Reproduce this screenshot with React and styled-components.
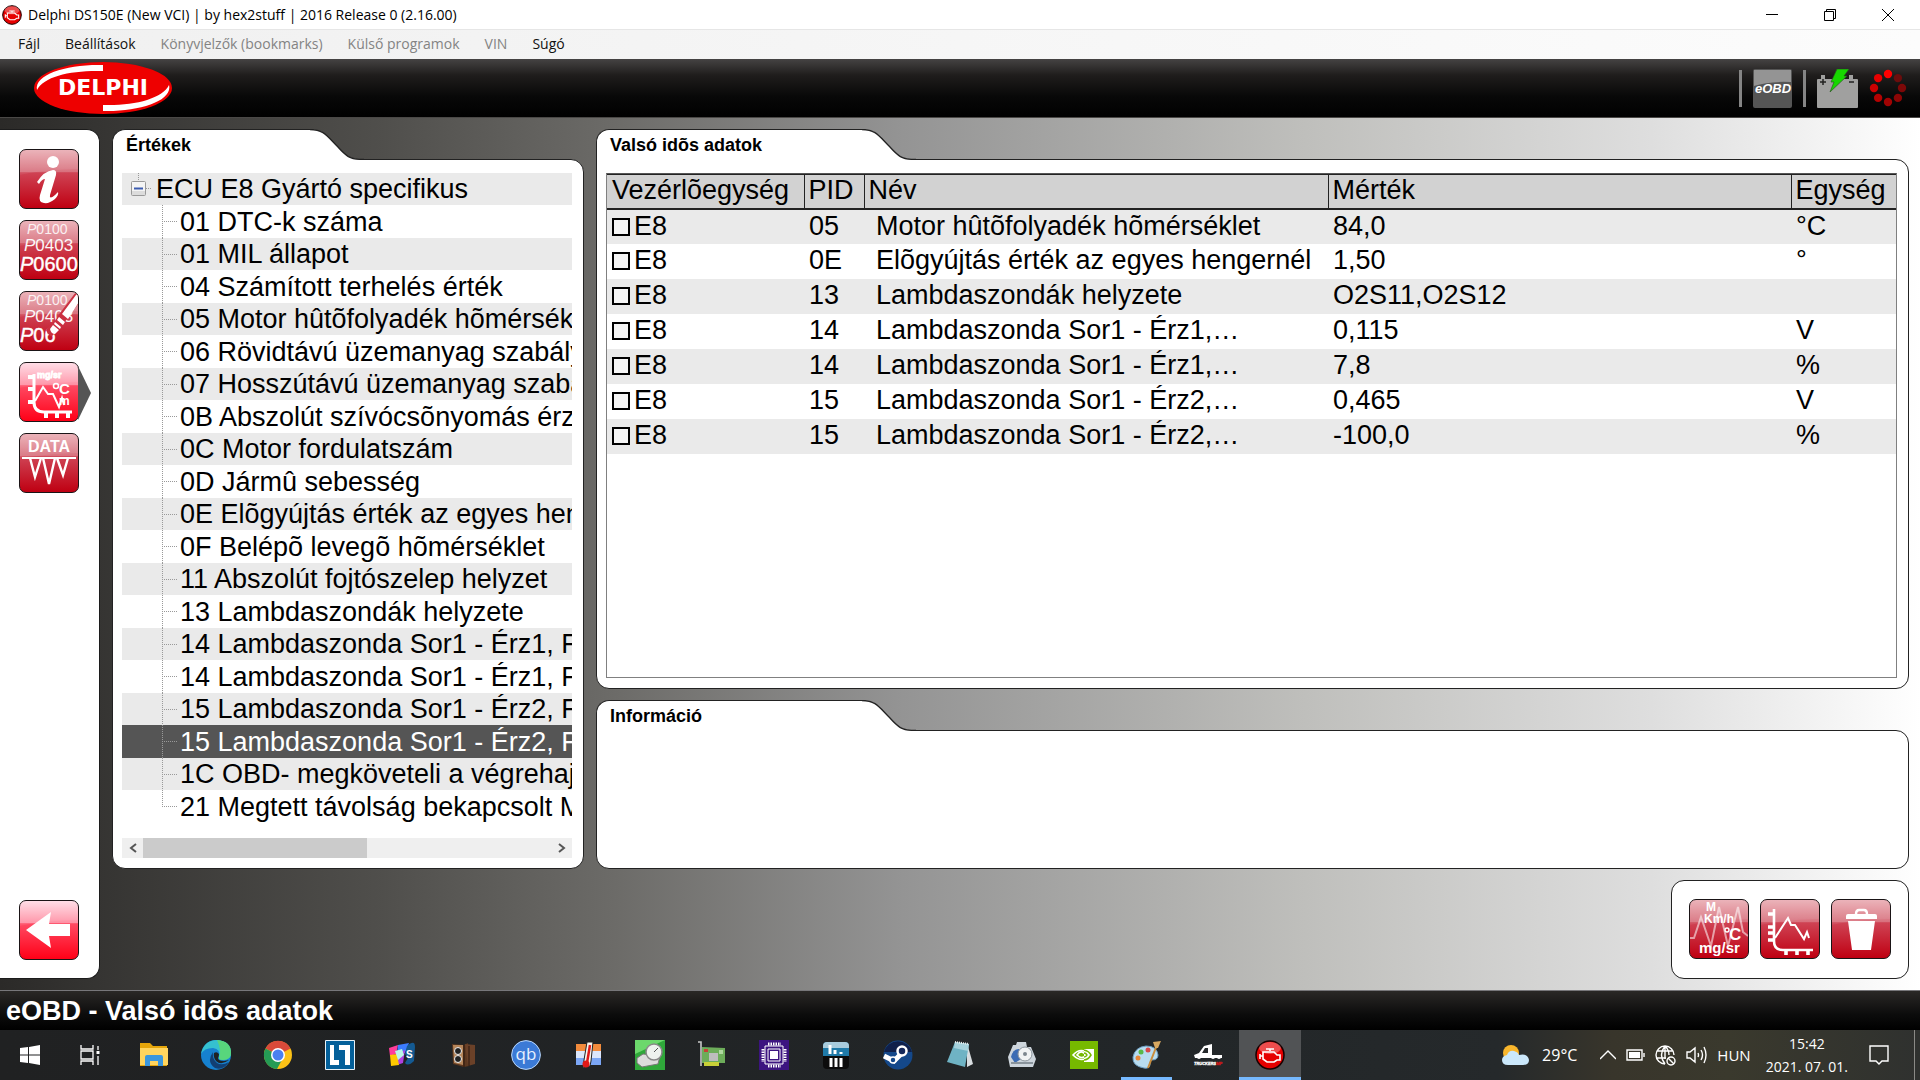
// App.jsx

import React, { useState } from 'react';
import styled, { createGlobalStyle } from 'styled-components';

const GlobalStyle = createGlobalStyle`
    * {
        box-sizing: border-box;
    }

    body {
        margin: 0;
        font-family: "Liberation Sans", Arial, sans-serif;
        color: #000;
    }

    button {
        padding: 0;
        border: 0;
        background: none;
        font: inherit;
        color: inherit;
    }

    ul {
        margin: 0;
        padding: 0;
        list-style: none;
    }

    svg {
        display: block;
        flex: none;
    }
`;

const Screen = styled.div`
    min-height: 100vh;
    display: flex;
    flex-direction: column;
`;

/* ---- window title and menu ---- */

const TitleBar = styled.header`
    height: 29px;
    display: flex;
    align-items: center;
    gap: 6px;
    padding: 0 3px 0 2px;
    background: #fff;
    font-family: "Open Sans", sans-serif;
    font-size: 14px;

    h1 {
        flex: 1;
        margin: 0;
        font-size: inherit;
        font-weight: 400;
    }
`;

const WindowButtons = styled.div`
    display: flex;
`;

const WindowButton = styled.button`
    width: 58px;
    height: 28px;
    display: flex;
    align-items: center;
    justify-content: center;
`;

const MenuBar = styled.nav`
    height: 30px;
    display: flex;
    align-items: center;
    gap: 25px;
    padding: 0 0 2px 18px;
    border-top: 1px solid #e6e6e6;
    background: linear-gradient(90deg, #f0f0f0, #fcfcfc);
    font-family: "Open Sans", sans-serif;
    font-size: 14px;
`;

const MenuItem = styled.button`
    color: #111;

    &:disabled {
        color: #838383;
    }
`;

/* ---- black brand bar ---- */

const BrandBar = styled.div`
    height: 59px;
    display: flex;
    align-items: center;
    justify-content: space-between;
    padding: 0 13px 0 34px;
    border-bottom: 1px solid #4a4846;
    background: linear-gradient(#454343, #1f1d1c 28%, #080808 65%, #000);
`;

const StatusIcons = styled.div`
    display: flex;
    align-items: center;
    gap: 11px;
`;

const Divider = styled.span`
    width: 3px;
    height: 37px;
    background: #858585;
`;

/* ---- workspace ---- */

const Workspace = styled.main`
    flex: 1;
    display: flex;
    padding: 11px 11px 11px 0;
    gap: 12px;
    background: linear-gradient(90deg, #2b2a28, #353432 5%, #504f4c 20%, #6c6b68 32%, #949494 47%, #bfbfbc 68%, #dedede 86%, #fff);
`;

const Sidebar = styled.nav`
    width: 100px;
    display: flex;
    flex-direction: column;
    align-items: flex-start;
    gap: 11px;
    padding: 19px 0 18px 19px;
    border: 1px solid #1c1c1c;
    border-left: 0;
    border-radius: 0 13px 13px 0;
    background: #fff;
`;

const ToolButton = styled.button`
    position: relative;
    width: 60px;
    height: 60px;
    border: 1px solid #1a1416;
    border-radius: 7px;
    overflow: ${(p) => (p.$active ? 'visible' : 'hidden')};
    margin-top: ${(p) => (p.$last ? 'auto' : '0')};
    background: ${(p) =>
        p.$bright
            ? 'linear-gradient(#ffdbe5, #ff8fa3 38%, #ff4a63 39%, #ff0017)'
            : 'linear-gradient(#eaadb4, #d8707d 38%, #cf4354 39%, #bf0012)'};

    &::after {
        content: "";
        display: ${(p) => (p.$active ? 'block' : 'none')};
        position: absolute;
        left: 100%;
        top: 3px;
        width: 13px;
        height: 54px;
        background: #555;
        clip-path: polygon(0 0, 100% 50%, 0 100%);
    }
`;

const Content = styled.div`
    flex: 1;
    min-width: 0;
    display: flex;
    flex-direction: column;
    gap: 11px;
`;

const Panels = styled.div`
    flex: 1;
    display: grid;
    grid-template-columns: 472px minmax(0, 1fr);
    gap: 12px;
`;

const RightColumn = styled.div`
    display: flex;
    flex-direction: column;
    gap: 11px;
`;

const PanelFrame = styled.section`
    flex: ${(p) => (p.$grow ? 1 : 'none')};
    min-width: 0;
    display: flex;
    flex-direction: column;
`;

const TabHead = styled.div`
    position: relative;
    display: flex;
    height: 31px;
    margin-bottom: -1px;

    h2 {
        width: ${(p) => (p.$wide ? '266px' : '198px')};
        margin: 0;
        padding-left: 13px;
        border: 1px solid #222;
        border-width: 1px 0 0 1px;
        border-radius: 13px 0 0 0;
        background: #fff;
        font-size: 18px;
        line-height: 30px;
    }
`;

const PanelBody = styled.div`
    flex: 1;
    min-height: 139px;
    display: flex;
    flex-direction: column;
    gap: 15px;
    padding: 13px 11px 10px 9px;
    border: 1px solid #222;
    border-radius: 0 13px 13px 13px;
    background: #fff;
`;

const Tree = styled.ul`
    flex: 1;
    overflow: hidden;
    font-size: 27px;
`;

const TreeRow = styled.li`
    display: flex;
    align-items: center;
    height: 32px;
    padding-left: ${(p) => (p.$root ? '9px' : '40px')};
    gap: ${(p) => (p.$root ? '5px' : '3px')};
    line-height: 32px;
    white-space: nowrap;
    background: ${(p) => (p.$selected ? '#555' : '#fff')};
    color: ${(p) => (p.$selected ? '#fff' : '#000')};

    &:nth-child(odd) {
        background: ${(p) => (p.$selected ? '#555' : '#eaeaea')};
    }

    &:nth-child(even) {
        height: 33px;
    }
`;

const Branch = styled.span`
    flex: none;
    align-self: stretch;
    width: 15px;
    background:
        repeating-linear-gradient(90deg, #999 0 1px, transparent 1px 2px) 0 50% / 100% 1px no-repeat,
        repeating-linear-gradient(#999 0 1px, transparent 1px 2px) 0 0 / 1px ${(p) => (p.$end ? '50%' : '100%')} no-repeat;
`;

const ScrollBar = styled.div`
    height: 20px;
    display: flex;
    background: #efefef;
`;

const ScrollArrow = styled.button`
    width: 21px;
    display: flex;
    align-items: center;
    justify-content: center;
`;

const ScrollTrack = styled.div`
    flex: 1;

    div {
        width: 55%;
        height: 100%;
        background: #cbcbcb;
    }
`;

const TableBox = styled.div`
    flex: 1;
    border: 1px solid #808080;
    border-top-color: #555;
`;

const ValueTable = styled.table`
    width: 100%;
    table-layout: fixed;
    border-collapse: collapse;
    font-size: 27px;
    line-height: 32px;

    th {
        height: 34px;
        padding: 0 0 0 4px;
        border: 1px solid #222;
        border-width: 1px 0 2px 1px;
        background: #d2d2d2;
        font-weight: 400;
        line-height: 30px;
        text-align: left;
        vertical-align: top;
        white-space: nowrap;
    }

    th:first-child {
        padding-left: 5px;
        border-left: 0;
    }

    td {
        height: 35px;
        padding: 0 0 0 5px;
        vertical-align: top;
        white-space: nowrap;
    }

    td:nth-child(3) {
        padding-left: 12px;
    }

    tbody tr:nth-child(odd) {
        background: #eaeaea;
    }
`;

const CheckLabel = styled.label`
    display: flex;
    align-items: center;
    gap: 4px;

    input {
        appearance: none;
        width: 18px;
        height: 18px;
        margin: 2px 0 0;
        border: 2px solid #000;
        background: #f6f6f6;
    }

    input:checked {
        background: #555;
    }
`;

const ActionBox = styled.div`
    align-self: flex-end;
    display: flex;
    gap: 11px;
    padding: 18px 17px 19px;
    border: 1px solid #222;
    border-radius: 13px;
    background: #fff;
`;

const StatusLine = styled.footer`
    height: 40px;
    padding-left: 6px;
    border-top: 1px solid #77777a;
    background: linear-gradient(#2a2826, #0c0c0c 60%, #000);
    color: #fff;
    font-size: 27px;
    font-weight: 700;
    line-height: 40px;
`;

/* ---- taskbar ---- */

const Taskbar = styled.div`
    height: 50px;
    display: flex;
    background: linear-gradient(90deg, #202122, #222628 60%, #25292b 78%, #38352b 84%, #3a392d 90%, #2f312f);
    color: #fff;
    font-family: "Open Sans", sans-serif;
    font-size: 15px;
`;

const TaskButton = styled.button`
    width: ${(p) => (p.$system ? '60px' : '62px')};
    display: flex;
    align-items: center;
    justify-content: center;
    background: ${(p) => (p.$active ? '#515355' : 'transparent')};
    border: 0 solid #76b9ff;
    border-width: ${(p) => (p.$active ? '3px 0' : '0')};
    border-top-color: transparent;
    background-clip: border-box;
`;

const TaskGroup = styled.div`
    display: flex;
    margin-left: 3px;
`;

const RunningMark = styled.span`
    display: flex;
    align-items: center;
    justify-content: center;
    width: 51px;
    height: 100%;
    border-top: 3px solid transparent;
    border-bottom: 3px solid #76b9ff;
`;

const Tray = styled.div`
    margin: 0 5px 0 auto;
    padding-right: 25px;
    display: flex;
    align-items: center;
    gap: 15px;
    border-right: 1px solid #8a8a86;
`;

const TrayGroup = styled.div`
    display: flex;
    align-items: center;
    gap: 10px;
`;

const Weather = styled.div`
    display: flex;
    align-items: center;
    gap: 13px;
    margin-right: 8px;
    font-size: 16px;
`;

const Clock = styled.time`
    margin-right: 6px;
    font-size: 14px;
    line-height: 23px;
    text-align: center;
`;

/* ---- icons ---- */

const EngineIcon = ({ size }) => (
    <svg width={size} height={size} viewBox="0 0 30 30">
        <circle cx="15" cy="15" r="14" fill="#e60000" stroke="#1a0000" strokeWidth="1.5" />
        <ellipse cx="15" cy="8" rx="11" ry="6" fill="#fff" opacity=".3" />
        <path d="M11 9h8M15 9v2M8 12h11l3 3h3v5h-3l-3 2h-7l-4-3zM5 14v5M5 16h3" fill="none" stroke="#fff" strokeWidth="1.6" />
    </svg>
);

const DelphiLogo = () => (
    <svg width="138" height="52" viewBox="0 0 138 52" role="img" aria-label="Delphi">
        <ellipse cx="69" cy="26" rx="69" ry="26" fill="#ee0000" />
        <path d="M69 3v6C38 8 10 14 3 28 0 12 34 2 69 3z" fill="#fff" />
        <path d="M69 49v-6c31 1 59-6 66-20 4 16-30 27-66 26z" fill="#fff" />
        <text x="69" y="33" textAnchor="middle" fill="#fff" fontFamily="DejaVu Sans" fontWeight="700" fontSize="22">DELPHI</text>
    </svg>
);

const EobdBadge = () => (
    <svg width="39" height="39" viewBox="0 0 39 39">
        <rect width="39" height="39" rx="2" fill="#555" />
        <path d="M1 1h37v12Q16 12 1 17z" fill="#949494" />
        <text x="20" y="24" textAnchor="middle" fill="#fff" fontFamily="Liberation Sans" fontWeight="700" fontStyle="italic" fontSize="13">eOBD</text>
    </svg>
);

const BatteryBadge = () => (
    <svg width="41" height="39" viewBox="0 0 41 39">
        <path d="M0 11q0-1 1-1h3V6h4v4h24V6h4v4h4q1 0 1 1v27q0 1-1 1H1q-1 0-1-1z" fill="#a0a09f" />
        <path d="M3 13h6M6 10v6M32 13h5" stroke="#222" strokeWidth="1.5" />
        <path d="M20 0h12l-5 7h3L13 23l4-10h-3z" fill="#17d800" stroke="#2a5a20" strokeWidth=".7" />
    </svg>
);

const spinnerDots = ['#ff0000', '#6b0d0d', '#7d0808', '#8c0505', '#a00303', '#b40202', '#cc0101', '#e80000'];

const Spinner = () => (
    <svg width="38" height="38" viewBox="0 0 38 38">
        {spinnerDots.map((color, i) => {
            const a = (i * Math.PI) / 4;
            return <circle key={color} cx={19 + 14 * Math.sin(a)} cy={19 - 14 * Math.cos(a)} r="4.2" fill={color} />;
        })}
    </svg>
);

const Glyph = ({ children }) => (
    <svg width="58" height="58" viewBox="1 1 58 58" fill="#fff" fontFamily="Liberation Sans">
        <path d="M0 0h60v20q-30 0-60 6z" fill="#fff" opacity=".08" />
        {children}
    </svg>
);

const InfoGlyph = () => (
    <Glyph>
        <ellipse cx="34" cy="13" rx="6" ry="6" />
        <path d="M18 33q7-11 16-12 4 0 3 5l-6 20q-1 5 5 0l3-3q1 3-3 7-6 5-11 4-6-1-4-8l5-16q-3 0-6 5z" />
    </Glyph>
);

const CodesGlyph = () => (
    <Glyph>
        <text x="8" y="14" fontSize="14" opacity=".85"><tspan fontStyle="italic">P</tspan>0100</text>
        <text x="5" y="31" fontSize="17" opacity=".95"><tspan fontStyle="italic">P</tspan>0403</text>
        <text x="1" y="51" fontSize="20" stroke="#fff" strokeWidth=".4"><tspan fontStyle="italic">P</tspan>0600</text>
    </Glyph>
);

const EraseGlyph = () => (
    <Glyph>
        <text x="8" y="14" fontSize="14" opacity=".85"><tspan fontStyle="italic">P</tspan>0100</text>
        <text x="5" y="31" fontSize="17" opacity=".95"><tspan fontStyle="italic">P</tspan>0403</text>
        <text x="1" y="51" fontSize="20" stroke="#fff" strokeWidth=".4"><tspan fontStyle="italic">P</tspan>06</text>
        <path d="M29 36l7-6 5-8L57 1h3v11L42 36l-9 9q-3 1-6-6z" fill="#cb3041" />
        <path d="M43 23L57 4l3-2v9L49 28zM40 26l6 5-2 3-6-5zM36 31l6 5-1 2-6-5zM34 34l6 5-4 4q-4 0-5-5z" />
    </Glyph>
);

const LiveGlyph = () => (
    <Glyph>
        <path d="M15 12v28q0 10 10 10h28" fill="none" stroke="#fff" strokeWidth="3" />
        <path d="M9 15h6M9 27h6M9 40h6M27 50v6M38 50v6M49 50v6" stroke="#fff" strokeWidth="4" />
        <path d="M16 39l8-14 5 7h5l6 13 3-9 2 7" fill="none" stroke="#fff" strokeWidth="2" />
        <text x="18" y="16" fontSize="9" fontWeight="700" stroke="#fff" strokeWidth=".8">mg/sr</text>
        <circle cx="37" cy="24" r="2.5" fill="none" stroke="#fff" strokeWidth="1.6" />
        <text x="40" y="32" fontSize="15" fontWeight="700">C</text>
        <text x="40" y="43" fontSize="12" fontWeight="700">m</text>
    </Glyph>
);

const DataGlyph = () => (
    <Glyph>
        <text x="30" y="19" textAnchor="middle" fontSize="16" fontWeight="700">DATA</text>
        <path d="M3 25h54" stroke="#fff" strokeWidth="2" />
        <path d="M11 25l5 19 6-19M24 25l6 26 6-26M38 25l6 17 5-17" fill="none" stroke="#fff" strokeWidth="2.4" />
    </Glyph>
);

const BackGlyph = () => (
    <Glyph>
        <path d="M7 30l25-18-2 12h21v12H30l2 12z" />
    </Glyph>
);

const UnitsGlyph = () => (
    <Glyph>
        <path d="M1 39h4l7-21 10 29 8-39 9 39 10-39 5 25 5 4" fill="none" stroke="#fff" strokeWidth="2" opacity=".55" />
        <g fontWeight="700" fontSize="12">
            <text x="17" y="12">M</text>
            <text x="15" y="24">Km/h</text>
            <text x="40" y="41" fontSize="17">C</text>
            <text x="10" y="54" fontSize="15">mg/sr</text>
        </g>
        <circle cx="38" cy="31" r="2" fill="none" stroke="#fff" strokeWidth="1.4" />
    </Glyph>
);

const ChartGlyph = () => (
    <Glyph>
        <path d="M14 10v32q0 9 9 9h30" fill="none" stroke="#fff" strokeWidth="2.6" />
        <path d="M8 15h6M8 28h6M8 34h6M8 41h6M26 51v5M37 51v5M48 51v5" stroke="#fff" strokeWidth="3.6" />
        <path d="M15 39l13-20 3 7h4l9 14 3-7 2 6" fill="none" stroke="#fff" strokeWidth="2" />
    </Glyph>
);

const TrashGlyph = () => (
    <Glyph>
        <path d="M25 15q0-4 3-4h5q3 0 3 4" fill="none" stroke="#fff" strokeWidth="2.4" />
        <path d="M15 17q0-2 2-2h27q2 0 2 2v3H15zM17 22h27l-4 29H21z" />
    </Glyph>
);

const TaskSvg = ({ children }) => (
    <svg width="30" height="30" viewBox="0 0 30 30">{children}</svg>
);

const WindowsIcon = () => (
    <svg width="20" height="20" viewBox="0 0 20 20" fill="#fff">
        <path d="M0 3l8-1v7.500H0zM9 2l11-2v9.500H9zM0 10.500h8V18l-8-1zM9 10.500h11V20L9 18z" />
    </svg>
);

const TaskViewIcon = () => (
    <svg width="20" height="20" viewBox="0 0 20 20" fill="none" stroke="#fff" strokeWidth="1.3">
        <path d="M1 0v4h12V0M1 20v-4h12v4M1 6h12v8H1zM18 1v4M18 11v9" />
        <path d="M18 6v3" strokeWidth="3" />
    </svg>
);

const ExplorerIcon = () => (
    <TaskSvg>
        <path d="M1 3h10l3 3h14v20H1z" fill="#e5a50a" />
        <path d="M1 8h28v17H1z" fill="#ffd45e" />
        <path d="M6 26V17q0-2 2-2h14q2 0 2 2v9h-5v-5h-8v5z" fill="#3a96dd" />
    </TaskSvg>
);

const EdgeIcon = () => (
    <TaskSvg>
        <circle cx="15" cy="15" r="15" fill="#1681cf" />
        <path d="M0 14Q3 0 16 0q14 1 14 13 0 7-8 7-5 0-4-3 2-8-6-9-9 0-12 6z" fill="#35c1d0" />
        <path d="M16 0q14 1 14 13 0 7-8 7-5 0-4-3 3-6-2-17z" fill="#58d67c" />
        <path d="M12 12q-7 10 2 16 8 3 14-6-7 4-12 1-5-4-4-11z" fill="#123f73" />
        <path d="M13 13q3-2 5 1 0 2-1 4 0 3 6 3l5-1q-8 6-13 1-3-4-2-8z" fill="#202224" />
    </TaskSvg>
);

const ChromeIcon = () => (
    <TaskSvg>
        <circle cx="15" cy="15" r="14" fill="#fbc116" />
        <path d="M15 15L2.500 8.500A14 14 0 0 1 27.500 8.500z" fill="#d94a3a" />
        <path d="M15 15L2.500 8.500A14 14 0 0 0 14 29l6-11z" fill="#259b55" />
        <circle cx="15" cy="15" r="7" fill="#fff" />
        <circle cx="15" cy="15" r="5.500" fill="#4a80f0" />
    </TaskSvg>
);

const BlocksIcon = () => (
    <TaskSvg>
        <path d="M.5.5h29v29H.5z" fill="#04609a" stroke="#e8f2f8" />
        <path d="M5 5h4v15h5v5H5zM14 5h11v20h-5V10h-6z" fill="#fff" />
    </TaskSvg>
);

const PaletteBoxIcon = () => (
    <TaskSvg>
        <path d="M2 8l9-3-2 9-6 2z" fill="#ff3c9a" />
        <path d="M11 5l11-2-4 10-8 1z" fill="#3c7cff" />
        <path d="M18 10l-2 13-6 2-1-11z" fill="#b040e0" />
        <path d="M3 15l7-1 2 11-8 1z" fill="#ffc800" />
        <path d="M8 11l7-2 2 6-6 5z" fill="#b8f6e8" />
        <path d="M20 6q8-7 8 1l-1 14q-6 6-9 2l3-5-3-4z" fill="#145a92" />
        <text x="19" y="18" fontFamily="Liberation Sans" fontWeight="700" fontSize="10" fill="#fff">S</text>
    </TaskSvg>
);

const SpeakerBoxIcon = () => (
    <TaskSvg>
        <path d="M3 4l12 1v22l-11-3zM15 5l4-2 1 23-5 1z" fill="#5b371f" />
        <path d="M4 5h10v20l-9-2z" fill="#b6865a" />
        <path d="M16 4l10 1v19l-7 2z" fill="#6b4128" />
        <path d="M15 5v22M20 6v20" stroke="#2a170c" />
        <circle cx="9" cy="11" r="3.500" fill="#222" stroke="#eee" />
        <circle cx="9" cy="19" r="3.500" fill="#222" stroke="#eee" />
    </TaskSvg>
);

const QbIcon = () => (
    <TaskSvg>
        <circle cx="15" cy="15" r="14.400" fill="#3b7ad6" stroke="#b9d6fa" />
        <text x="15" y="20" textAnchor="middle" fontFamily="Open Sans" fontSize="17" fill="#e8f1ff">qb</text>
    </TaskSvg>
);

const ThermoIcon = () => (
    <TaskSvg>
        <path d="M3 4h25v21H3z" fill="#f28b3c" />
        <path d="M3 11h25v14H3z" fill="#dbe6fb" />
        <path d="M3 18h25v7H3z" fill="#7ba6f5" />
        <path d="M14 2h6l-2 19-1 5-7 2 1-8z" fill="#f5f5ee" stroke="#222" />
        <path d="M17 5l-3 18" stroke="#e01818" strokeWidth="2.500" />
        <circle cx="13" cy="24" r="3.500" fill="#e01818" />
    </TaskSvg>
);

const DiskIcon = () => (
    <TaskSvg>
        <path d="M0 0h30v30H0z" fill="#2fa83a" />
        <path d="M0 0h30L0 14z" fill="#6cd86c" />
        <path d="M2 18l6-4 17 2-2 8-16 3-5-4z" fill="#dcdcdc" stroke="#777" />
        <circle cx="19" cy="12" r="8" fill="#eef2ee" stroke="#888" strokeWidth="1.500" />
        <path d="M19 12l4-4" stroke="#555" />
    </TaskSvg>
);

const CardIcon = () => (
    <TaskSvg>
        <path d="M1 2h3v24" fill="none" stroke="#c8c8c8" strokeWidth="1.600" />
        <path d="M5 7l23 1v15H5z" fill="#6dad5a" />
        <path d="M7 22h15v4H7z" fill="#c8d038" />
        <path d="M12 13h9v8h-9z" fill="#bdbdbd" />
        <path d="M7 9h4v3H7z" fill="#c84038" />
        <path d="M22 10h4v4h-4z" fill="#b0d8a0" />
    </TaskSvg>
);

const ChipIcon = () => (
    <TaskSvg>
        <path d="M0 0h30v30H0z" fill="#3c1480" />
        <path d="M6 6h18v18H6zM9 9h12v12H9z" fill="none" stroke="#fff" />
        <path d="M11 11h8v8h-8z" fill="#fff" />
        <path d="M9 4h13M9 26h13" stroke="#fff" strokeWidth="3" strokeDasharray="1.500 1" />
        <path d="M4 9v13M26 9v13" stroke="#fff" strokeWidth="3" strokeDasharray="1.500 1" />
    </TaskSvg>
);

const MonitorIcon = () => (
    <TaskSvg>
        <rect x="2" y="2" width="26" height="27" rx="4" fill="#0c0c0c" />
        <path d="M2 16V6q0-4 4-4h18q4 0 4 4v10z" fill="#1f7aa8" />
        <path d="M2 8V6q0-4 4-4h18q4 0 4 4v2z" fill="#a8cbdc" />
        <path d="M9 5v9M14 10v4M20 12v2M10 18v9M15 18v9M20 18v9" stroke="#fff" strokeWidth="3" />
    </TaskSvg>
);

const SteamIcon = () => (
    <TaskSvg>
        <circle cx="15" cy="15" r="14.500" fill="#14488a" />
        <path d="M1 12A14.500 14.500 0 0 1 29 12z" fill="#10204a" />
        <path d="M1 16l10 5 7-7" fill="none" stroke="#fff" strokeWidth="5" />
        <circle cx="19" cy="11" r="4.500" fill="#14285a" stroke="#fff" strokeWidth="2.500" />
        <circle cx="10" cy="20" r="3" fill="#14488a" stroke="#fff" strokeWidth="1.500" />
    </TaskSvg>
);

const NotepadIcon = () => (
    <TaskSvg>
        <path d="M22 3l6 21-6 3z" fill="#d8dde0" />
        <path d="M10 2l14 2-4 23L2 22z" fill="#6fb3c4" />
        <path d="M10 2l14 2-1 7-14-3z" fill="#a6d2dc" />
        <path d="M10 2l14 2" stroke="#eee" strokeWidth="2" strokeDasharray="1 1" />
    </TaskSvg>
);

const ToolboxIcon = () => (
    <TaskSvg>
        <path d="M10 2h9l1 5h4l5 12-3 8H3L1 17 6 5h3z" fill="#cdd5dc" />
        <path d="M4 17q2-8 8-8l2 10-6 4z" fill="#3c6cb4" />
        <circle cx="18" cy="14" r="7" fill="#f0f2f4" stroke="#8a949c" />
        <circle cx="18" cy="14" r="2" fill="#7c868e" />
        <path d="M4 23h22" stroke="#8a949c" strokeWidth="2" />
    </TaskSvg>
);

const NvidiaIcon = () => (
    <TaskSvg>
        <path d="M1 1h28v28H1z" fill="#76b900" />
        <path d="M15 9h10v13H15z" fill="#fff" />
        <path d="M4 15q8-9 17 0-8 9-17 0zM8 15q4-6 9 0-4 5-9 0z" fill="none" stroke="#fff" strokeWidth="1.600" />
        <path d="M15 10q5 1 7 5-3 5-7 5M15 13q2 0 3 2-1 2-3 2" fill="none" stroke="#76b900" strokeWidth="1.600" />
    </TaskSvg>
);

const PaintIcon = () => (
    <TaskSvg>
        <path d="M15 6q11 0 12 9 0 5-6 5-3 1-2 5-1 4-6 3Q1 26 2 17 4 7 15 6z" fill="#b8dcf0" stroke="#6a9cc0" />
        <circle cx="7" cy="18" r="2.500" fill="#e8883a" />
        <circle cx="10" cy="12" r="2.500" fill="#58b848" />
        <circle cx="17" cy="10" r="2.500" fill="#d84848" />
        <path d="M26 5L17 28" stroke="#c88c3c" strokeWidth="2" />
        <path d="M22 2l8-1-3 7h-3z" fill="#d8a860" />
    </TaskSvg>
);

const TruckIcon = () => (
    <TaskSvg>
        <path d="M1 15l5-2 5-7 8-2v11h10v3H2z" fill="#fff" />
        <path d="M12 8h3v5H9z" fill="#25292b" />
        <circle cx="6" cy="17" r="2" fill="#fff" /><circle cx="20" cy="17" r="2" fill="#fff" /><circle cx="26" cy="17" r="2" fill="#fff" />
        <text x="1" y="25" fontFamily="Liberation Sans" fontWeight="700" fontStyle="italic" fontSize="4" fill="#fff" stroke="#fff" strokeWidth=".3">TRUCKERS<tspan fill="#d01818" stroke="#d01818">MP</tspan></text>
    </TaskSvg>
);

const WeatherIcon = () => (
    <svg width="27" height="21" viewBox="0 0 27 21">
        <circle cx="9" cy="8" r="8" fill="#f9b62c" />
        <path d="M6 20q-6 0-6-5 0-4 5-5 2-5 7-4 4 1 5 4 9-2 10 5 0 5-6 5z" fill="#cbe8fb" />
    </svg>
);

const trayStroke = { fill: 'none', stroke: '#fff', strokeWidth: 1.4 };

const ChevronIcon = () => (
    <svg width="16" height="10" viewBox="0 0 16 10" {...trayStroke}><path d="M0 9l8-8 8 8" /></svg>
);

const BatteryIcon = () => (
    <svg width="19" height="12" viewBox="0 0 19 12" {...trayStroke}>
        <path d="M1 1h15v10H1zM18 4v4" /><path d="M3 3h11v6H3z" fill="#fff" stroke="none" />
    </svg>
);

const GlobeIcon = () => (
    <svg width="21" height="21" viewBox="0 0 21 21" {...trayStroke}>
        <path d="M19 10a9 9 0 1 0-9 9M10 1q-7 9 0 18M10 1q4 4 4 9M2 6h16M1 13h10M10 1v13" />
        <circle cx="16" cy="16" r="4" /><path d="M13 13l6 6" />
    </svg>
);

const VolumeIcon = () => (
    <svg width="21" height="18" viewBox="0 0 21 18" {...trayStroke}>
        <path d="M1 6h3l5-4v14l-5-4H1zM12 7q1 2 0 4M15 4q3 5 0 10M18 1q4 8 0 16" />
    </svg>
);

const NoticeIcon = () => (
    <svg width="20" height="20" viewBox="0 0 20 20" {...trayStroke}><path d="M1 1h18v15h-6l-3 3-3-3H1z" /></svg>
);

/* ---- data ---- */

const menuItems = [
    { label: 'Fájl' },
    { label: 'Beállítások' },
    { label: 'Könyvjelzők (bookmarks)', disabled: true },
    { label: 'Külső programok', disabled: true },
    { label: 'VIN', disabled: true },
    { label: 'Súgó' },
];

const treeItems = [
    '01 DTC-k száma',
    '01 MIL állapot',
    '04 Számított terhelés érték',
    '05 Motor hûtõfolyadék hõmérséklet',
    '06 Rövidtávú üzemanyag szabályzás',
    '07 Hosszútávú üzemanyag szabályzás',
    '0B Abszolút szívócsõnyomás érzékelõ',
    '0C Motor fordulatszám',
    '0D Jármû sebesség',
    '0E Elõgyújtás érték az egyes hengernél',
    '0F Belépõ levegõ hõmérséklet',
    '11 Abszolút fojtószelep helyzet',
    '13 Lambdaszondák helyzete',
    '14 Lambdaszonda Sor1 - Érz1, Feszültség',
    '14 Lambdaszonda Sor1 - Érz1, Feszültség',
    '15 Lambdaszonda Sor1 - Érz2, Feszültség',
    '15 Lambdaszonda Sor1 - Érz2, Feszültség',
    '1C OBD- megköveteli a végrehajtást',
    '21 Megtett távolság bekapcsolt MIL',
];

const values = [
    ['05', 'Motor hûtõfolyadék hõmérséklet', '84,0', '°C'],
    ['0E', 'Elõgyújtás érték az egyes hengernél', '1,50', '°'],
    ['13', 'Lambdaszondák helyzete', 'O2S11,O2S12', ''],
    ['14', 'Lambdaszonda Sor1 - Érz1,…', '0,115', 'V'],
    ['14', 'Lambdaszonda Sor1 - Érz1,…', '7,8', '%'],
    ['15', 'Lambdaszonda Sor1 - Érz2,…', '0,465', 'V'],
    ['15', 'Lambdaszonda Sor1 - Érz2,…', '-100,0', '%'],
];

const taskIcons = [
    ['Explorer', ExplorerIcon],
    ['Edge', EdgeIcon],
    ['Chrome', ChromeIcon],
    ['Blocks', BlocksIcon],
    ['Palette', PaletteBoxIcon],
    ['Audio', SpeakerBoxIcon],
    ['qBittorrent', QbIcon],
    ['Thermometer', ThermoIcon],
    ['Disk', DiskIcon],
    ['Device', CardIcon],
    ['CPU', ChipIcon],
    ['Monitor', MonitorIcon],
    ['Steam', SteamIcon],
    ['Notepad', NotepadIcon],
    ['Toolbox', ToolboxIcon],
    ['Nvidia', NvidiaIcon],
];

const Panel = ({ title, wide, grow, children }) => (
    <PanelFrame $grow={grow}>
        <TabHead $wide={wide}>
            <h2>{title}</h2>
            <svg width="54" height="31" viewBox="0 0 54 31">
                <path d="M0 .5C14 .5 17 7 27 17 36 27 39 30.500 54 30.500V31H0z" fill="#fff" />
                <path d="M0 .5C14 .5 17 7 27 17 36 27 39 30.500 54 30.500" fill="none" stroke="#222" strokeWidth="1.3" />
            </svg>
        </TabHead>
        <PanelBody>{children}</PanelBody>
    </PanelFrame>
);

const App = () => {
    const [selected, setSelected] = useState(16);

    return (
        <Screen>
            <GlobalStyle />
            <TitleBar>
                <EngineIcon size={20} />
                <h1>Delphi DS150E (New VCI) | by hex2stuff | 2016 Release 0 (2.16.00)</h1>
                <WindowButtons>
                    <WindowButton aria-label="Minimize">
                        <svg width="12" height="12" stroke="#000"><path d="M0 5.500h12" /></svg>
                    </WindowButton>
                    <WindowButton aria-label="Restore">
                        <svg width="12" height="12" fill="none" stroke="#000"><path d="M.5 2.500h9v9h-9zM2.500 2.500v-2h9v9h-2" /></svg>
                    </WindowButton>
                    <WindowButton aria-label="Close">
                        <svg width="12" height="12" stroke="#000"><path d="M0 0l12 12M12 0L0 12" /></svg>
                    </WindowButton>
                </WindowButtons>
            </TitleBar>
            <MenuBar>
                {menuItems.map((item) => (
                    <MenuItem key={item.label} disabled={item.disabled}>{item.label}</MenuItem>
                ))}
            </MenuBar>
            <BrandBar>
                <DelphiLogo />
                <StatusIcons>
                    <Divider />
                    <EobdBadge />
                    <Divider />
                    <BatteryBadge />
                    <Spinner />
                </StatusIcons>
            </BrandBar>

            <Workspace>
                <Sidebar>
                    <ToolButton aria-label="Info"><InfoGlyph /></ToolButton>
                    <ToolButton aria-label="Read codes"><CodesGlyph /></ToolButton>
                    <ToolButton aria-label="Erase codes"><EraseGlyph /></ToolButton>
                    <ToolButton aria-label="Live data" $bright $active><LiveGlyph /></ToolButton>
                    <ToolButton aria-label="Data"><DataGlyph /></ToolButton>
                    <ToolButton aria-label="Back" $bright $last><BackGlyph /></ToolButton>
                </Sidebar>

                <Content>
                    <Panels>
                        <Panel title="Értékek" grow>
                            <Tree>
                                <TreeRow $root>
                                    <svg width="20" height="32" viewBox="0 0 20 32">
                                        <path d="M7.500 0v9M15 15.500h5" stroke="#999" strokeDasharray="1 1" />
                                        <rect x=".5" y="8.500" width="14" height="14" rx="1" fill="#f4f4f4" stroke="#999" />
                                        <path d="M1 18h13v4H1z" fill="#dcdcdc" />
                                        <path d="M3 15.500h9" stroke="#3c5cb0" strokeWidth="2" />
                                    </svg>
                                    ECU E8 Gyártó specifikus
                                </TreeRow>
                                {treeItems.map((item, i) => (
                                    <TreeRow key={i} $selected={i === selected} onClick={() => setSelected(i)}>
                                        <Branch $end={i === treeItems.length - 1} />
                                        {item}
                                    </TreeRow>
                                ))}
                            </Tree>
                            <ScrollBar>
                                <ScrollArrow aria-label="Scroll left">
                                    <svg width="8" height="10" fill="none" stroke="#555" strokeWidth="2"><path d="M7 1L2 5l5 4" /></svg>
                                </ScrollArrow>
                                <ScrollTrack><div /></ScrollTrack>
                                <ScrollArrow aria-label="Scroll right">
                                    <svg width="8" height="10" fill="none" stroke="#555" strokeWidth="2"><path d="M1 1l5 4-5 4" /></svg>
                                </ScrollArrow>
                            </ScrollBar>
                        </Panel>

                        <RightColumn>
                            <Panel title="Valsó idõs adatok" wide grow>
                                <TableBox>
                                    <ValueTable>
                                        <colgroup>
                                            <col width="197" />
                                            <col width="60" />
                                            <col width="464" />
                                            <col />
                                            <col width="105" />
                                        </colgroup>
                                        <thead>
                                            <tr>
                                                <th>Vezérlõegység</th>
                                                <th>PID</th>
                                                <th>Név</th>
                                                <th>Mérték</th>
                                                <th>Egység</th>
                                            </tr>
                                        </thead>
                                        <tbody>
                                            {values.map(([pid, name, value, unit], i) => (
                                                <tr key={i}>
                                                    <td><CheckLabel><input type="checkbox" />E8</CheckLabel></td>
                                                    <td>{pid}</td>
                                                    <td>{name}</td>
                                                    <td>{value}</td>
                                                    <td>{unit}</td>
                                                </tr>
                                            ))}
                                        </tbody>
                                    </ValueTable>
                                </TableBox>
                            </Panel>
                            <Panel title="Információ" wide />
                        </RightColumn>
                    </Panels>

                    <ActionBox>
                        <ToolButton aria-label="Units"><UnitsGlyph /></ToolButton>
                        <ToolButton aria-label="Chart"><ChartGlyph /></ToolButton>
                        <ToolButton aria-label="Delete"><TrashGlyph /></ToolButton>
                    </ActionBox>
                </Content>
            </Workspace>

            <StatusLine>eOBD - Valsó idõs adatok</StatusLine>

            <Taskbar>
                <TaskButton $system aria-label="Start"><WindowsIcon /></TaskButton>
                <TaskButton $system aria-label="Task view"><TaskViewIcon /></TaskButton>
                <TaskGroup>
                    {taskIcons.map(([label, Icon]) => (
                        <TaskButton key={label} aria-label={label}><Icon /></TaskButton>
                    ))}
                    <TaskButton aria-label="Paint"><RunningMark><PaintIcon /></RunningMark></TaskButton>
                    <TaskButton aria-label="TruckersMP"><TruckIcon /></TaskButton>
                    <TaskButton aria-label="Delphi" $active><EngineIcon size={30} /></TaskButton>
                </TaskGroup>
                <Tray>
                    <Weather><WeatherIcon />29°C</Weather>
                    <TrayGroup>
                        <ChevronIcon />
                        <BatteryIcon />
                        <GlobeIcon />
                        <VolumeIcon />
                        HUN
                    </TrayGroup>
                    <Clock>15:42<br />2021. 07. 01.</Clock>
                    <NoticeIcon />
                </Tray>
            </Taskbar>
        </Screen>
    );
};

export default App;
